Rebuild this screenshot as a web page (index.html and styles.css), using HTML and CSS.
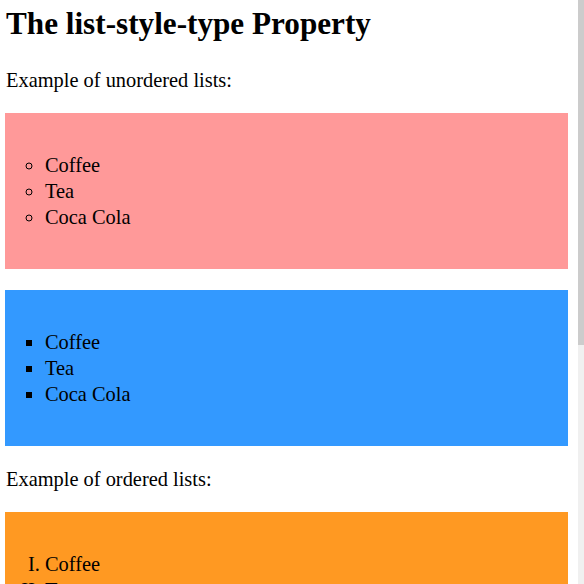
FILE: index.html
```
<!DOCTYPE html>
<html>
<head>
<meta charset="utf-8">
<title>The list-style-type Property</title>
<link rel="stylesheet" href="styles.css">
</head>
<body>
<h1 class="title">The list-style-type Property</h1>
<p class="intro">Example of unordered lists:</p>
<ul class="list list-circle">
  <li>Coffee</li>
  <li>Tea</li>
  <li>Coca Cola</li>
</ul>
<ul class="list list-square">
  <li>Coffee</li>
  <li>Tea</li>
  <li>Coca Cola</li>
</ul>
<p class="intro">Example of ordered lists:</p>
<ol class="list list-roman">
  <li>Coffee</li>
  <li>Tea</li>
  <li>Coca Cola</li>
</ol>
<ol class="list list-alpha">
  <li>Coffee</li>
  <li>Tea</li>
  <li>Coca Cola</li>
</ol>
<div class="scrollbar"><div class="scrollbar-thumb"></div></div>
</body>
</html>
```
FILE: styles.css
```
html {
  background: #ffffff;
}

body {
  margin: 0;
  padding: 0 16px 120px 5px;
  font-family: "Liberation Serif", "Times New Roman", serif;
  font-size: 20.4px;
  color: #000000;
}

.title {
  margin: 5px 0 26px 1px;
  font-size: 31.2px;
  line-height: 37px;
  font-weight: bold;
}

.intro {
  margin: 21px 0 21px 1px;
  line-height: 24px;
}

.list {
  margin: 21px 0;
  padding: 39px 0 39px 40px;
}

.list li {
  line-height: 26px;
}

.list-circle {
  background: #ff9999;
  list-style-type: circle;
}

.list-square {
  background: #3399ff;
  list-style-type: square;
}

.list-roman {
  background: #ff9922;
  list-style-type: upper-roman;
}

.list-alpha {
  background: #cc99ff;
  list-style-type: lower-alpha;
}

.scrollbar {
  position: fixed;
  top: 0;
  right: 0;
  width: 6px;
  height: 100%;
  background: #f0f0f0;
}

.scrollbar-thumb {
  height: 345px;
  background: #cccccc;
}
```
